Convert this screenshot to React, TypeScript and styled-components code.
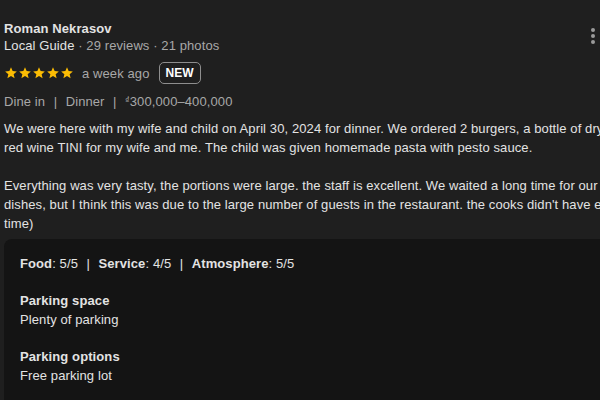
import React from 'react';
import styled, { createGlobalStyle } from 'styled-components';

const colors = {
  page: '#1f1f1f',
  panel: '#141414',
  text: '#e3e3e3',
  muted: '#a8a8a8',
  star: '#fbbc04',
  border: '#8e8e8e',
};

const GlobalStyle = createGlobalStyle`
  html, body {
    margin: 0;
    padding: 0;
    background: ${colors.page};
  }
  body {
    font-family: "Liberation Sans", Arial, sans-serif;
    letter-spacing: 0.1px;
    color: ${colors.text};
    width: 600px;
    height: 400px;
    overflow: hidden;
  }
`;

interface Rating {
  label: string;
  value: string;
}

interface Attribute {
  title: string;
  value: string;
}

const ratings: Rating[] = [
  { label: 'Food', value: '5/5' },
  { label: 'Service', value: '4/5' },
  { label: 'Atmosphere', value: '5/5' },
];

const attributes: Attribute[] = [
  { title: 'Parking space', value: 'Plenty of parking' },
  { title: 'Parking options', value: 'Free parking lot' },
];

// the card is wider than the window, so the text is broken where the page broke it
const reviewText: string[][] = [
  [
    'We were here with my wife and child on April 30, 2024 for dinner. We ordered 2 burgers, a bottle of dry',
    'red wine TINI for my wife and me. The child was given homemade pasta with pesto sauce.',
  ],
  [
    'Everything was very tasty, the portions were large. the staff is excellent. We waited a long time for our',
    "dishes, but I think this was due to the large number of guests in the restaurant. the cooks didn't have enough",
    'time)',
  ],
];

export default function App() {
  return (
    <>
      <GlobalStyle />
      <Review>
        <Header>
          <Author>
            <Name>Roman Nekrasov</Name>
            <Meta>
              <span>Local Guide</span>
              <Dim> · 29 reviews · 21 photos</Dim>
            </Meta>
          </Author>
          <MoreButton aria-label="More">
            <Dot />
            <Dot />
            <Dot />
          </MoreButton>
        </Header>

        <StarsRow>
          <Stars>
            {[0, 1, 2, 3, 4].map((i) => (
              <Star key={i} />
            ))}
          </Stars>
          <When>a week ago</When>
          <Badge>NEW</Badge>
        </StarsRow>

        <Tags>
          <span>Dine in</span>
          <Sep>|</Sep>
          <span>Dinner</span>
          <Sep>|</Sep>
          <span>
            <Dong>₫</Dong>300,000–400,000
          </span>
        </Tags>

        <Body>
          {reviewText.map((para, p) => (
            <Paragraph key={p}>
              {para.map((line, i) => (
                <Line key={i}>{line}</Line>
              ))}
            </Paragraph>
          ))}
        </Body>

        <Panel>
          <RatingLine>
            {ratings.map((r, i) => (
              <React.Fragment key={r.label}>
                {i > 0 && <PanelSep>|</PanelSep>}
                <span>
                  <b>{r.label}</b>: {r.value}
                </span>
              </React.Fragment>
            ))}
          </RatingLine>
          {attributes.map((a) => (
            <AttrBlock key={a.title}>
              <AttrTitle>{a.title}</AttrTitle>
              <AttrValue>{a.value}</AttrValue>
            </AttrBlock>
          ))}
        </Panel>
      </Review>
    </>
  );
}

function Star() {
  return (
    <svg width="14" height="14" viewBox="0 0 24 24">
      <path
        fill={colors.star}
        d="M12 17.27L18.18 21l-1.64-7.03L22 9.24l-7.19-.61L12 2 9.19 8.63 2 9.24l5.46 4.73L5.82 21z"
      />
    </svg>
  );
}

const Review = styled.div`
  padding: 20px 0 0 4px;
  font-size: 13px;
`;

const Header = styled.div`
  display: flex;
  justify-content: space-between;
  align-items: flex-start;
`;

const Author = styled.div`
  display: flex;
  flex-direction: column;
`;

const Name = styled.div`
  font-weight: bold;
  line-height: 17px;
`;

const Meta = styled.div`
  line-height: 18px;
`;

const Dim = styled.span`
  color: ${colors.muted};
`;

const MoreButton = styled.div`
  display: flex;
  flex-direction: column;
  gap: 2px;
  padding: 8px 5px 0 0;
`;

const Dot = styled.span`
  width: 4px;
  height: 4px;
  border-radius: 50%;
  background: #9a9a9a;
`;

const StarsRow = styled.div`
  display: flex;
  align-items: center;
  margin-top: 7px;
  height: 22px;
`;

const Stars = styled.div`
  display: flex;
  margin-right: 8px;
`;

const When = styled.span`
  color: ${colors.muted};
  margin-right: 9px;
`;

const Badge = styled.span`
  border: 1px solid ${colors.border};
  border-radius: 5px;
  padding: 3px 6px;
  font-size: 12px;
  font-weight: bold;
  line-height: 14px;
  letter-spacing: 0;
  color: #ffffff;
`;

const Tags = styled.div`
  margin-top: 7px;
  line-height: 18px;
  color: ${colors.muted};
`;

const Sep = styled.span`
  margin: 0 8.5px;
`;

const Dong = styled.span`
  font-size: 9px;
  vertical-align: 3px;
`;

const Body = styled.div`
  margin-top: 8px;
  display: flex;
  flex-direction: column;
  gap: 19px;
  line-height: 19px;
`;

const Paragraph = styled.p`
  margin: 0;
`;

const Line = styled.span`
  display: block;
  white-space: nowrap;
`;

const Panel = styled.div`
  margin-top: 6px;
  background: ${colors.panel};
  border-radius: 8px 0 0 8px;
  padding: 15.5px 16px 30px;
  line-height: 18.5px;
`;

const RatingLine = styled.div``;

const PanelSep = styled.span`
  margin: 0 8.5px;
`;

const AttrBlock = styled.div`
  margin-top: 19px;
`;

const AttrTitle = styled.div`
  font-weight: bold;
`;

const AttrValue = styled.div``;
